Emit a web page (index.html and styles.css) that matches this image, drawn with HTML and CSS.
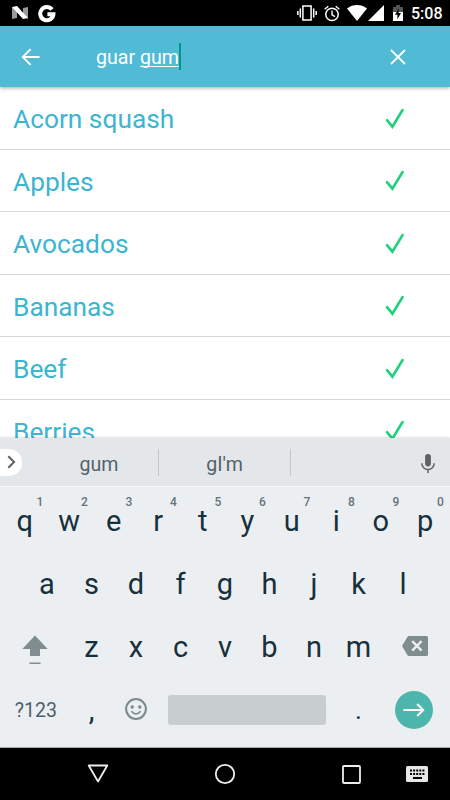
FILE: index.html
```
<!DOCTYPE html>
<html lang="en">
<head>
    <meta charset="UTF-8">
    <meta name="viewport" content="width=device-width, initial-scale=1.0">
    <title>Food search</title>
    <link rel="stylesheet" href="styles.css">
</head>
<body>
    <div class="phone">
        <div class="status-bar">
            <svg class="icon-n" width="16" height="14" viewBox="0 0 16 14">
                <path d="M0 1v12l5-1V4zM16 1v12l-5-3V2z" fill="#999"/>
                <path d="M0 1l5-1 11 12-5 1z" fill="#fff"/>
            </svg>
            <svg class="icon-g" width="18" height="18" viewBox="0 0 18 18">
                <path d="M14 4.6A6.6 6.6 0 1 0 15.4 9.3H9.4" fill="none" stroke="#fff" stroke-width="4"/>
            </svg>
            <div class="status-right">
                <svg width="20" height="16" viewBox="0 0 20 16">
                    <path d="M5.9 1h8.2v14H5.9zM3.3 3.5v9M16.7 3.5v9M.8 6v4M19.2 6v4" fill="none" stroke="#fff" stroke-width="1.5"/>
                </svg>
                <svg class="icon-alarm" width="16" height="17" viewBox="0 0 16 17">
                    <circle cx="8" cy="9.4" r="6.2" fill="none" stroke="#fff" stroke-width="1.5"/>
                    <path d="M8 5.6v4.2l3 1.8M.7 4.3L4.3 1.2M15.3 4.3L11.7 1.2" fill="none" stroke="#fff" stroke-width="1.4"/>
                </svg>
                <svg class="icon-wifi" width="20" height="16" viewBox="0 0 20 16">
                    <path d="M0 3.5C6-1.1 14-1.1 20 3.5L10 16z" fill="#fff"/>
                </svg>
                <svg class="icon-signal" width="16" height="16" viewBox="0 0 16 16">
                    <path d="M16 0v16H0z" fill="#fff"/>
                </svg>
                <svg class="icon-battery" width="10" height="16" viewBox="0 0 10 16">
                    <path d="M0 2h3V0h4v2h3v5H0z" fill="#555"/>
                    <path d="M0 7h10v9H0z" fill="#fff"/>
                    <path d="M5.8 3.5L2 9.7h2.4v4.5L8 8H5.6z" fill="#000"/>
                </svg>
                <span class="time">5:08</span>
            </div>
        </div>

        <div class="search-bar">
            <svg class="back" width="20" height="18" viewBox="0 0 20 18">
                <path d="M18.5 9H2M9.6 1.2L1.8 9l7.8 7.8" fill="none" stroke="#fff" stroke-width="1.9"/>
            </svg>
            <div class="query">guar <span class="typing">gum</span></div>
            <svg class="clear" width="16" height="16" viewBox="0 0 16 16">
                <path d="M1 1l14 14M15 1L1 15" stroke="#fff" stroke-width="1.9"/>
            </svg>
        </div>

        <div class="food-list">
            <div class="food">Acorn squash<svg width="20" height="21" viewBox="0 0 20 21"><path d="M2 12.2l5.4 6.5L17.6 2"/></svg></div>
            <div class="food">Apples<svg width="20" height="21" viewBox="0 0 20 21"><path d="M2 12.2l5.4 6.5L17.6 2"/></svg></div>
            <div class="food">Avocados<svg width="20" height="21" viewBox="0 0 20 21"><path d="M2 12.2l5.4 6.5L17.6 2"/></svg></div>
            <div class="food">Bananas<svg width="20" height="21" viewBox="0 0 20 21"><path d="M2 12.2l5.4 6.5L17.6 2"/></svg></div>
            <div class="food">Beef<svg width="20" height="21" viewBox="0 0 20 21"><path d="M2 12.2l5.4 6.5L17.6 2"/></svg></div>
            <div class="food">Berries<svg width="20" height="21" viewBox="0 0 20 21"><path d="M2 12.2l5.4 6.5L17.6 2"/></svg></div>
        </div>

        <div class="suggestions">
            <div class="expand">
                <svg width="10" height="14" viewBox="0 0 10 14">
                    <path d="M1.3 1.2L7.1 7l-5.8 5.8" fill="none" stroke="#616161" stroke-width="2"/>
                </svg>
            </div>
            <div class="word first">gum</div>
            <div class="word">gI'm</div>
            <svg class="mic" width="14" height="20" viewBox="0 0 14 20">
                <rect x="4.1" y="0" width="5.8" height="12.4" rx="2.8" fill="#616161"/>
                <path d="M.8 9.3a6.2 6.2 0 0 0 12.4 0M7 15.5V19" fill="none" stroke="#616161" stroke-width="1.5"/>
            </svg>
        </div>

        <div class="keyboard">
            <div class="key-row">
                <div class="key">q<span class="hint">1</span></div>
                <div class="key">w<span class="hint">2</span></div>
                <div class="key">e<span class="hint">3</span></div>
                <div class="key">r<span class="hint">4</span></div>
                <div class="key">t<span class="hint">5</span></div>
                <div class="key">y<span class="hint">6</span></div>
                <div class="key">u<span class="hint">7</span></div>
                <div class="key">i<span class="hint">8</span></div>
                <div class="key">o<span class="hint">9</span></div>
                <div class="key">p<span class="hint">0</span></div>
            </div>
            <div class="key-row">
                <div class="key">a</div>
                <div class="key">s</div>
                <div class="key">d</div>
                <div class="key">f</div>
                <div class="key">g</div>
                <div class="key">h</div>
                <div class="key">j</div>
                <div class="key">k</div>
                <div class="key">l</div>
            </div>
            <div class="key-row">
                <div class="key wide">
                    <svg class="shift" width="26" height="30" viewBox="0 0 26 30">
                        <path d="M13 .5L25.7 14H18v7H8v-7H.3zM7.5 27.5h11V29h-11z" fill="#7f8c90"/>
                    </svg>
                </div>
                <div class="key">z</div>
                <div class="key">x</div>
                <div class="key">c</div>
                <div class="key">v</div>
                <div class="key">b</div>
                <div class="key">n</div>
                <div class="key">m</div>
                <div class="key wide">
                    <svg class="backspace" width="26" height="20" viewBox="0 0 26 20">
                        <path d="M7 0h17.5Q26 0 26 1.5v17q0 1.5-1.5 1.5H7q-1 0-1.6-.9L0 10 5.4.9Q6 0 7 0z" fill="#7f8c90"/>
                        <path d="M10.2 5.2l9.4 9.4M19.6 5.2l-9.4 9.4" stroke="#eceff1" stroke-width="2.4"/>
                    </svg>
                </div>
            </div>
            <div class="key-row">
                <div class="key wide symbols">?123</div>
                <div class="key comma">,</div>
                <div class="key">
                    <svg class="emoji" width="22" height="22" viewBox="0 0 22 22">
                        <circle cx="11" cy="11" r="9.9" fill="none" stroke="#7b898d" stroke-width="2"/>
                        <circle cx="7.2" cy="9" r="1.7" fill="#7b898d"/>
                        <circle cx="14.8" cy="9" r="1.7" fill="#7b898d"/>
                        <path d="M6.4 13.3q4.6 5.4 9.2 0" fill="none" stroke="#7b898d" stroke-width="1.7"/>
                    </svg>
                </div>
                <div class="space"></div>
                <div class="key period">.</div>
                <div class="key wide">
                    <div class="enter">
                        <svg width="22" height="14" viewBox="0 0 22 14">
                            <path d="M.5 7H20M14.2 1l6 6-6 6" fill="none" stroke="#fff" stroke-width="2"/>
                        </svg>
                    </div>
                </div>
            </div>
        </div>

        <div class="nav-bar">
            <svg class="nav-back" width="22" height="20" viewBox="0 0 22 20">
                <path d="M1.7 1.5h18.6L11 17.5z" fill="none" stroke="#eee" stroke-width="1.8" stroke-linejoin="round"/>
            </svg>
            <svg class="nav-home" width="22" height="22" viewBox="0 0 22 22">
                <circle cx="11" cy="11" r="9.2" fill="none" stroke="#eee" stroke-width="1.8"/>
            </svg>
            <svg class="nav-recent" width="19" height="19" viewBox="0 0 19 19">
                <rect x="1" y="1" width="17" height="17" rx="1" fill="none" stroke="#eee" stroke-width="1.8"/>
            </svg>
            <svg class="nav-keyboard" width="22" height="16" viewBox="0 0 22 16">
                <rect width="22" height="16" rx="1.5" fill="#e6e6e6"/>
                <path d="M4 4.5h15M4 8h15" stroke="#000" stroke-width="2" stroke-dasharray="2 1.1"/>
                <path d="M7 12h9" stroke="#000" stroke-width="2"/>
            </svg>
        </div>
    </div>
</body>
</html>
```
FILE: styles.css
```
* {
    box-sizing: border-box;
    padding: 0;
    margin: 0;
}

body {
    font-family: Roboto, "Liberation Sans", sans-serif;
    background-color: #fff;
}

svg {
    display: block;
    flex-shrink: 0;
}

.phone {
    width: 450px;
    height: 800px;
    overflow: hidden;
    display: flex;
    flex-direction: column;
}

/* status bar */
.status-bar {
    height: 26px;
    flex-shrink: 0;
    background-color: #000;
    display: flex;
    align-items: center;
    padding: 0 9px 0 12px;
}
.icon-g {
    margin-left: 10px;
    margin-top: 1px;
}
.status-right {
    margin-left: auto;
    display: flex;
    align-items: center;
}
.icon-alarm {
    margin-left: 7px;
}
.icon-wifi {
    margin-left: 7px;
}
.icon-signal {
    margin-left: 1px;
}
.icon-battery {
    margin-left: 9px;
}
.time {
    width: 30px;
    margin-left: 8px;
    color: #fff;
    font-size: 16px;
    font-weight: 500;
    line-height: 24px;
    padding-top: 2px;
    white-space: nowrap;
}

/* search bar */
.search-bar {
    height: 61px;
    flex-shrink: 0;
    background-color: #51bad4;
    display: flex;
    align-items: center;
    padding: 0 44px 0 21px;
    position: relative;
    box-shadow: 0 1px 4px rgba(0, 0, 0, 0.35);
}
.query {
    margin-left: 55px;
    color: #fff;
    font-size: 19.6px;
    line-height: 24px;
    padding-top: 3px;
    border-right: 2px solid #009688;
}
.typing {
    text-decoration: underline;
    text-decoration-thickness: 1px;
    text-underline-offset: 2px;
    text-decoration-skip-ink: none;
}
.clear {
    margin-left: auto;
}

/* food list */
.food-list {
    height: 351px;
    flex-shrink: 0;
    overflow: hidden;
}
.food {
    height: 62.5px;
    border-bottom: 1px solid #d6d6d6;
    display: flex;
    align-items: center;
    justify-content: space-between;
    padding: 2.5px 45px 0 13px;
    color: #3db5d0;
    font-size: 26.3px;
}
.food svg {
    margin-top: -1.5px;
}
.food svg path {
    fill: none;
    stroke: #1fd17c;
    stroke-width: 2.6;
    stroke-linecap: round;
}

/* suggestions */
.suggestions {
    height: 49px;
    flex-shrink: 0;
    background-color: #e3e7ea;
    border-bottom: 1px solid #f8fafa;
    box-shadow: 0 -1px 2px rgba(0, 0, 0, 0.12);
    position: relative;
    display: flex;
    align-items: center;
}
.expand {
    width: 22px;
    height: 27px;
    margin-top: 1px;
    background-color: #fff;
    border-radius: 0 13px 13px 0;
    padding: 6px 0 0 7px;
}
.word {
    width: 132px;
    height: 27px;
    margin-top: 1px;
    border-right: 1px solid #c1c7ca;
    color: #54626a;
    font-size: 19.6px;
    line-height: 31px;
    text-align: center;
}
.word.first {
    width: 119px;
    margin-left: 18px;
}
.mic {
    margin-left: auto;
    margin-right: 15px;
    margin-top: 4px;
}

/* keyboard */
.keyboard {
    height: 261px;
    flex-shrink: 0;
    background-color: #eceff1;
    border-bottom: 1px solid #a8aaab;
    padding-top: 2px;
}
.key-row {
    height: 63px;
    display: flex;
    justify-content: center;
}
.key {
    width: 44.5px;
    position: relative;
    display: flex;
    align-items: center;
    justify-content: center;
    color: #17303b;
    font-size: 29px;
    line-height: 63px;
    padding-top: 2px;
}
.hint {
    position: absolute;
    top: 6px;
    left: 32.5px;
    width: 10px;
    color: #647379;
    font-size: 12px;
    font-weight: 500;
    line-height: 14px;
    text-align: center;
}
.wide {
    width: 66.75px;
    padding-top: 0;
}
.shift {
    margin-top: 6px;
    margin-right: 1px;
}
.backspace {
    margin-top: -2px;
    margin-left: 1px;
}
.emoji {
    margin-top: -3px;
}
.symbols {
    color: #50616a;
    font-size: 19.6px;
    padding-top: 1px;
}
.space {
    width: 158px;
    height: 30px;
    margin: 17px 10px 0;
    background-color: #c8cdd0;
    border-radius: 3px;
}
.period {
    font-size: 26px;
}
.enter {
    width: 38px;
    height: 38px;
    border-radius: 50%;
    background-color: #4db6ac;
    display: flex;
    align-items: center;
    justify-content: center;
}

/* navigation bar */
.nav-bar {
    height: 52px;
    flex-shrink: 0;
    background-color: #000;
    display: flex;
    align-items: center;
    padding-left: 87px;
}
.nav-home {
    margin-left: 105px;
}
.nav-recent {
    margin-left: 106px;
}
.nav-keyboard {
    margin-left: 45px;
}
```
